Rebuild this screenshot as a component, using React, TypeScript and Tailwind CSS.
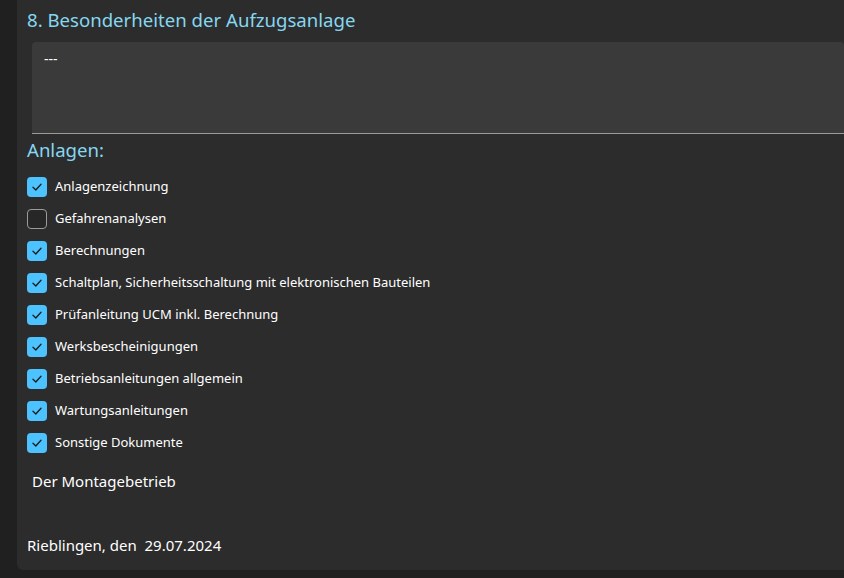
import { useState } from "react";

const items = [
  { label: "Anlagenzeichnung", checked: true },
  { label: "Gefahrenanalysen", checked: false },
  { label: "Berechnungen", checked: true },
  { label: "Schaltplan, Sicherheitsschaltung mit elektronischen Bauteilen", checked: true },
  { label: "Prüfanleitung UCM inkl. Berechnung", checked: true },
  { label: "Werksbescheinigungen", checked: true },
  { label: "Betriebsanleitungen allgemein", checked: true },
  { label: "Wartungsanleitungen", checked: true },
  { label: "Sonstige Dokumente", checked: true },
];

const CheckRow = ({ label, initial }: { label: string; initial: boolean }) => {
  const [checked, setChecked] = useState(initial);
  return (
    <label className="flex items-center h-8 cursor-pointer" onClick={() => setChecked(!checked)}>
      {checked ? (
        <span className="w-5 h-5 rounded-[4px] bg-[#4cc2ff] flex items-center justify-center">
          <svg width="12" height="12" viewBox="0 0 12 12" fill="none">
            <path d="M2 6.3 L4.8 9 L10 3.3" stroke="#1a1a1a" strokeWidth="1.3" strokeLinecap="round" strokeLinejoin="round" />
          </svg>
        </span>
      ) : (
        <span className="w-5 h-5 rounded-[4px] border border-[#9b9b9b] bg-[#272727]" />
      )}
      <span className="ml-2 text-[13px] text-white">{label}</span>
    </label>
  );
};

const App = () => {
  return (
    <div className="w-[844px] h-[578px] bg-[#202020] overflow-hidden" style={{ fontFamily: '"Noto Sans", "Open Sans", sans-serif' }}>
      <div className="ml-[17px] h-[570px] bg-[#2c2c2c] rounded-bl-[6px] pl-[10px] flex flex-col">
        {/* Überschrift */}
        <h2 className="text-[18.6px] leading-[40px] text-[#86d7f0]">8. Besonderheiten der Aufzugsanlage</h2>
        <div className="ml-[5px] mt-[2px] h-[92px] bg-[#3a3a3a] rounded-t-[4px] border-b border-[#9b9b9b] px-3 pt-[6px] text-[14px] text-white">
          ---
        </div>
        <h3 className="text-[18.6px] leading-[30px] text-[#86d7f0] mt-[1px]">Anlagen:</h3>
        {/* Checkliste */}
        <div className="mt-[6px] flex flex-col">
          {items.map((it) => (
            <CheckRow key={it.label} label={it.label} initial={it.checked} />
          ))}
        </div>
        <div className="ml-[5px] mt-[10px] text-[15px] text-white leading-[24px]">Der Montagebetrieb</div>
        <div className="mt-[40px] text-[15px] text-white leading-[24px] whitespace-pre">Rieblingen, den  29.07.2024</div>
      </div>
    </div>
  );
};

export default App;
